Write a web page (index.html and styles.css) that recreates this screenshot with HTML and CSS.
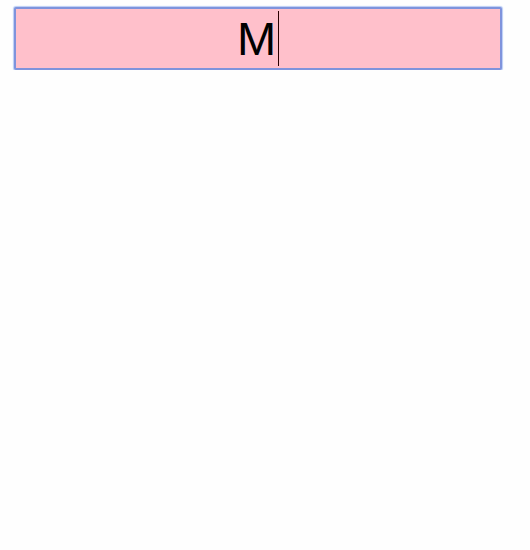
FILE: index.html
```html
<!DOCTYPE html>
<html>
<head>
<meta charset="utf-8">
<link rel="stylesheet" href="styles.css">
</head>
<body>
<div class="field"><span class="value">M</span><span class="caret"></span></div>
</body>
</html>
```
FILE: styles.css
```css
html, body { margin: 0; padding: 0; background: #fefefe; }
body { padding: 7px 14px 0 14px; }
.field {
  width: 488px;
  height: 63px;
  box-sizing: border-box;
  background: #ffc0cb;
  border: 2px solid #7f93dc;
  border-radius: 2px;
  box-shadow: 0 0 1px 1px #b9cdf5;
  display: flex;
  align-items: center;
  justify-content: center;
  font-family: "Liberation Sans", Arial, sans-serif;
  font-size: 47px;
  color: #000;
}
.value { line-height: 1; }
.caret {
  width: 1px;
  height: 55px;
  background: #2a0000;
  margin-left: 2px;
}
```
